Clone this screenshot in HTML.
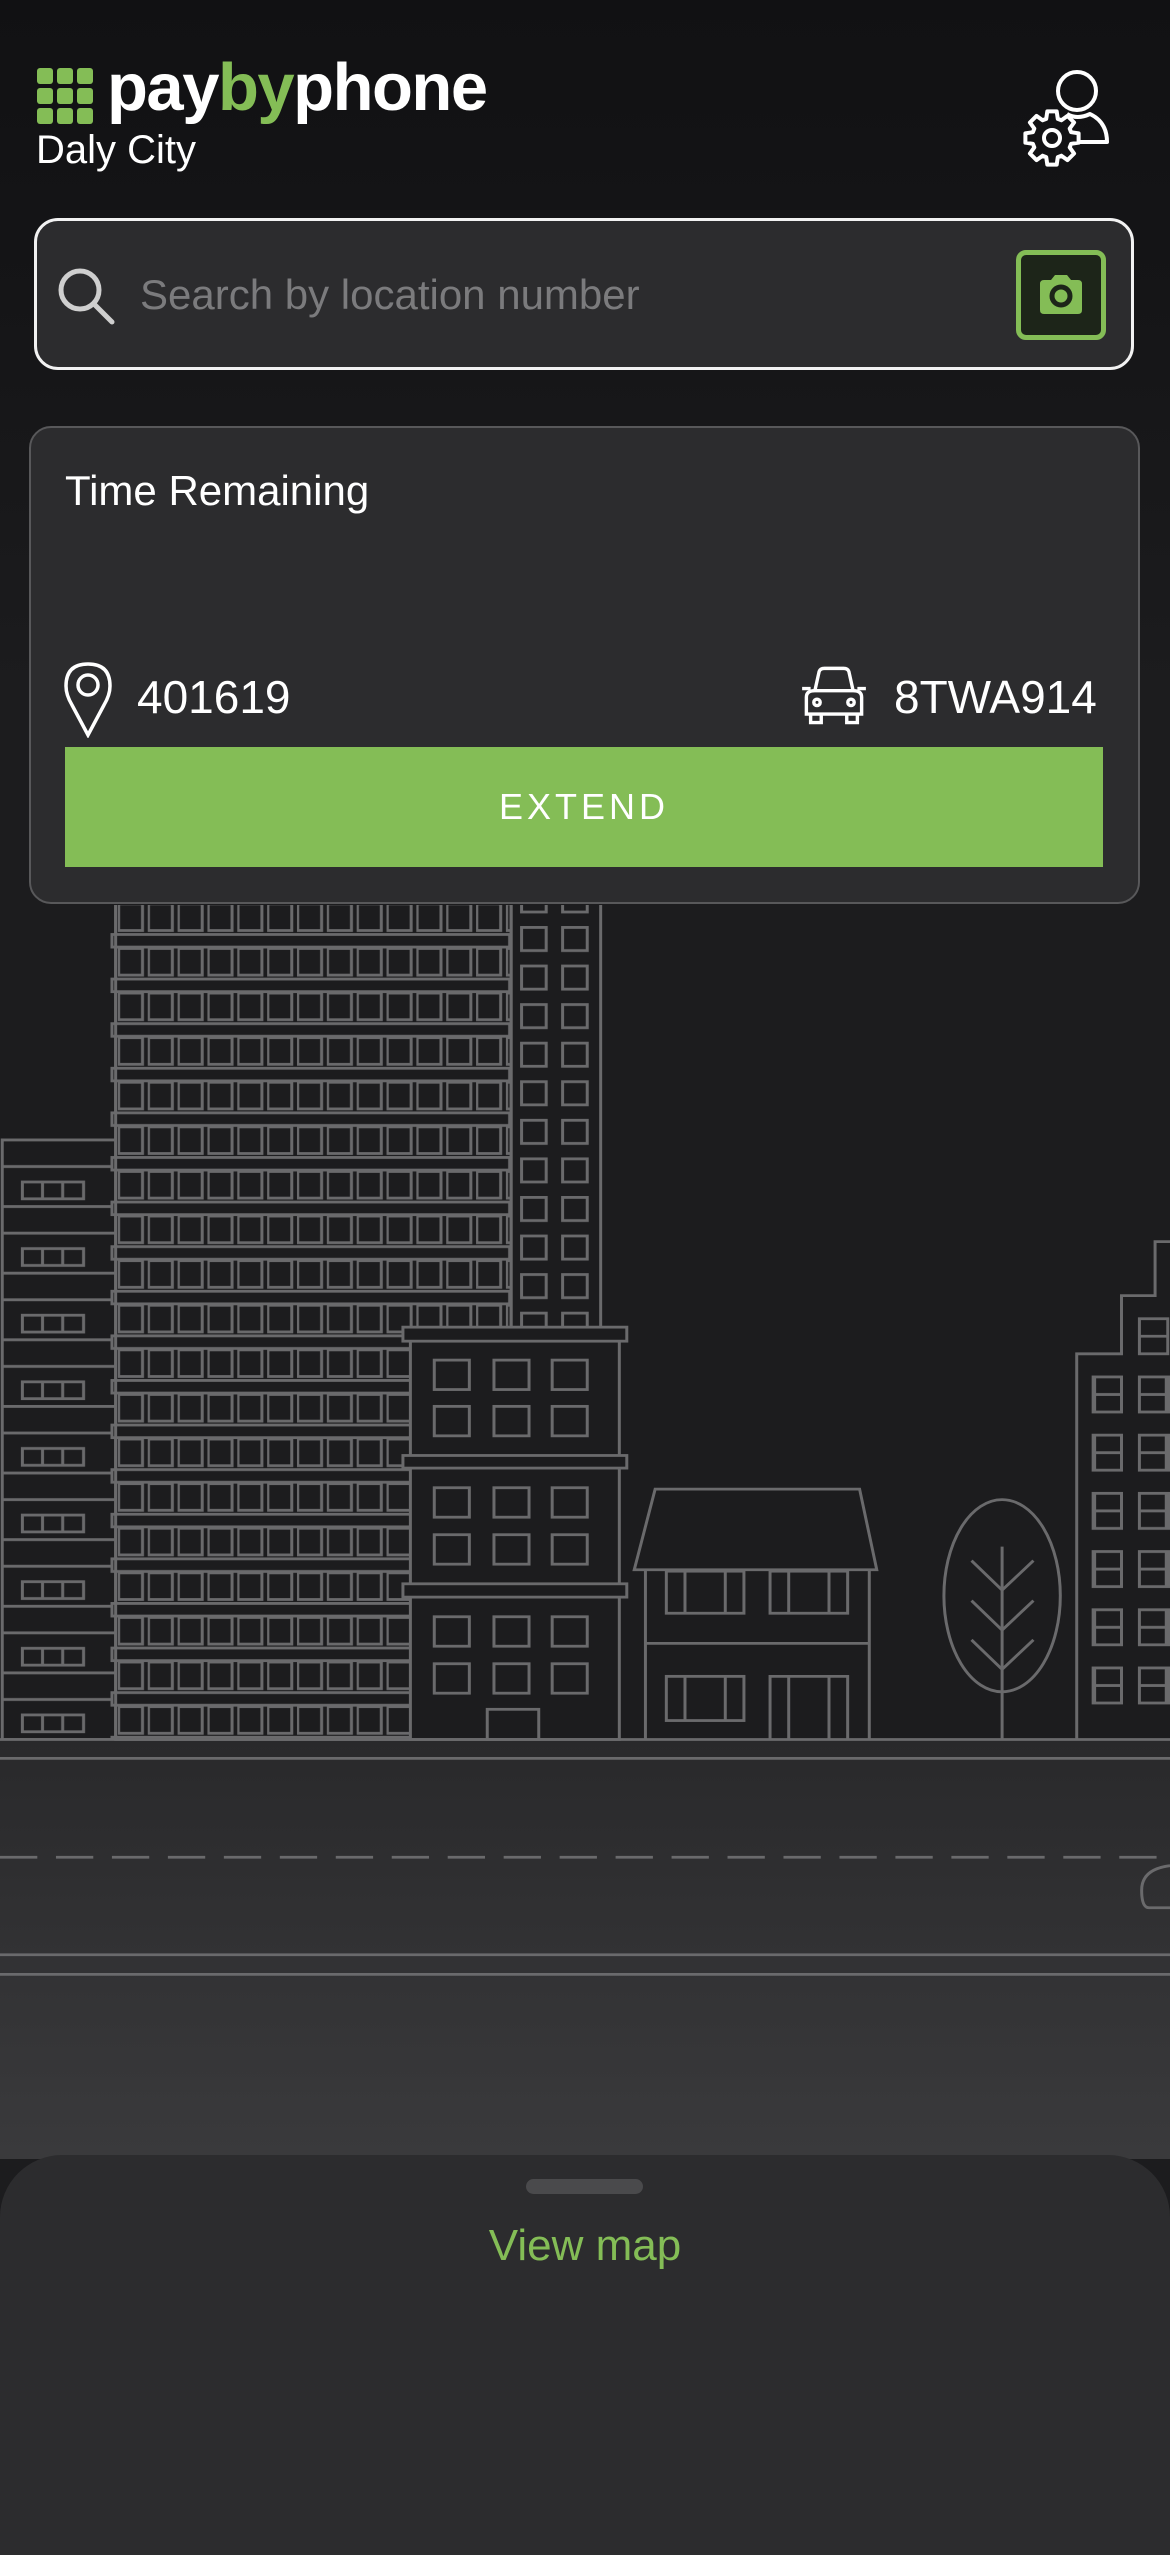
<!DOCTYPE html>
<html><head><meta charset="utf-8"><style>
*{margin:0;padding:0;box-sizing:border-box}
body{width:1170px;height:2532px;overflow:hidden;background:#1c1c1e;font-family:"Liberation Sans",sans-serif;position:relative;color:#fff}
.topbg{position:absolute;left:0;top:0;width:1170px;height:900px;background:linear-gradient(#111113 0px,#151517 300px,#1c1c1e 700px)}
.road{position:absolute;left:0;top:1739px;width:1170px;height:420px;background:linear-gradient(#29292b,#3a3a3c)}
.abs{position:absolute}
.logo{left:107px;top:54px;font-size:67px;font-weight:bold;letter-spacing:-1.5px;line-height:1}
.city{left:36px;top:130px;font-size:40px;line-height:1}
.search{left:34px;top:218px;width:1100px;height:152px;border:3px solid #f2f2f2;border-radius:24px;background:#2c2c2e}
.ph{left:140px;top:274px;font-size:42px;color:#7b7b7d;line-height:1}
.cam{left:1016px;top:250px;width:90px;height:90px;border:5px solid #84bd56;border-radius:10px;background:#1d2519}
.card{left:29px;top:426px;width:1111px;height:478px;border:2px solid #58585a;border-radius:22px;background:#2c2c2e}
.btn{left:65px;top:747px;width:1038px;height:120px;background:#84bd56;color:#fff;font-size:36px;letter-spacing:4px;text-align:center;line-height:120px}
.sheet{left:0;top:2155px;width:1170px;height:400px;background:#2c2c2e;border-radius:62px 62px 0 0}
</style></head><body>
<div class="topbg"></div>
<div class="road"></div>

<svg class="abs" style="left:37px;top:68px" width="56" height="56" viewBox="0 0 56 56" fill="#84bd56">
<rect x="0" y="0" width="16" height="16" rx="3"/><rect x="20" y="0" width="16" height="16" rx="3"/><rect x="40" y="0" width="16" height="16" rx="3"/>
<rect x="0" y="20" width="16" height="16" rx="3"/><rect x="20" y="20" width="16" height="16" rx="3"/><rect x="40" y="20" width="16" height="16" rx="3"/>
<rect x="0" y="40" width="16" height="16" rx="3"/><rect x="20" y="40" width="16" height="16" rx="3"/><rect x="40" y="40" width="16" height="16" rx="3"/>
</svg>
<div class="abs logo">pay<span style="color:#84bd56">by</span>phone</div>
<div class="abs city">Daly City</div>

<svg class="abs" style="left:1020px;top:70px" width="100" height="100" viewBox="0 0 100 100" fill="none" stroke="#fff" stroke-width="4" stroke-linejoin="round">
<circle cx="57" cy="21" r="19"/>
<path d="M47 44 Q57 50 70 44 Q87 52 87 72 L59 72"/>
<path d="M51.1 62.2 L58.6 63.3 L58.6 72.7 L51.1 73.8 L49.7 77.4 L54.1 83.5 L47.5 90.1 L41.4 85.7 L37.8 87.1 L36.7 94.6 L27.3 94.6 L26.2 87.1 L22.6 85.7 L16.5 90.1 L9.9 83.5 L14.3 77.4 L12.9 73.8 L5.4 72.7 L5.4 63.3 L12.9 62.2 L14.3 58.6 L9.9 52.5 L16.5 45.9 L22.6 50.3 L26.2 48.9 L27.3 41.4 L36.7 41.4 L37.8 48.9 L41.4 50.3 L47.5 45.9 L54.1 52.5 L49.7 58.6 Z"/>
<circle cx="32" cy="68" r="8"/>
</svg>

<div class="abs search"></div>
<svg class="abs" style="left:56px;top:266px" width="62" height="60" viewBox="0 0 62 60" fill="none" stroke="#cfcfcf" stroke-width="5">
<circle cx="24" cy="24" r="19"/><path d="M38 38 L56 56" stroke-linecap="round"/>
</svg>
<div class="abs ph">Search by location number</div>
<div class="abs cam"></div>
<svg class="abs" style="left:1036px;top:274px" width="50" height="42" viewBox="0 0 50 42">
<path d="M4 10 Q4 6 8 6 L15 6 L19 1 L31 1 L35 6 L42 6 Q46 6 46 10 L46 36 Q46 40 42 40 L8 40 Q4 40 4 36 Z" fill="#84bd56"/>
<circle cx="25" cy="22" r="9" fill="none" stroke="#1d2519" stroke-width="5"/>
</svg>

<div class="abs card"></div>
<div class="abs" style="left:65px;top:470px;font-size:42px;line-height:1">Time Remaining</div>
<svg class="abs" style="left:64px;top:662px" width="48" height="76" viewBox="0 0 48 76" fill="none" stroke="#fff" stroke-width="3.5">
<path d="M24 73 L8 43 Q2 33 2 24 Q2 2 24 2 Q46 2 46 24 Q46 33 40 43 Z"/><circle cx="24" cy="23" r="10"/>
</svg>
<div class="abs" style="left:137px;top:674px;font-size:46px;line-height:1">401619</div>
<svg class="abs" style="left:800px;top:664px" width="68" height="64" viewBox="0 0 64 58" fill="none" stroke="#fff" stroke-width="3.2">
<path d="M14 24 L18 6 Q19 3 23 3 L41 3 Q45 3 46 6 L50 24"/>
<path d="M6 30 Q6 24 14 24 L50 24 Q58 24 58 30 L58 46 L6 46 Z"/>
<path d="M10 46 L10 54 L20 54 L20 46 M44 46 L44 54 L54 54 L54 46"/>
<circle cx="16" cy="35" r="3"/><circle cx="48" cy="35" r="3"/><path d="M2 22 L10 22 M54 22 L62 22"/>
</svg>
<div class="abs" style="left:894px;top:674px;font-size:46px;line-height:1">8TWA914</div>
<div class="abs btn">EXTEND</div>

<!-- city -->
<svg class="abs" style="left:0;top:905px" width="1170" height="1075" viewBox="0 35 1568 1533" preserveAspectRatio="none">
<defs>
<pattern id="win" patternUnits="userSpaceOnUse" x="158" y="75" width="40" height="63.6"><rect x="1" y="22" width="32" height="38" fill="none" stroke="#6a6a6c" stroke-width="4"/></pattern>
<pattern id="band" patternUnits="userSpaceOnUse" x="148" y="75" width="1000" height="63.6"><rect x="2" y="2" width="533" height="18" fill="#1c1c1e" stroke="#6a6a6c" stroke-width="4"/></pattern>
<pattern id="nw" patternUnits="userSpaceOnUse" x="697" y="10" width="200" height="55"><rect x="2" y="2" width="33" height="33" fill="none" stroke="#6a6a6c" stroke-width="4"/><rect x="57" y="2" width="33" height="33" fill="none" stroke="#6a6a6c" stroke-width="4"/></pattern>
<pattern id="lw" patternUnits="userSpaceOnUse" x="0" y="368" width="200" height="95"><path d="M0 2 H155 M0 40 H155" stroke="#6a6a6c" stroke-width="4"/><rect x="30" y="62" width="82" height="24" fill="none" stroke="#6a6a6c" stroke-width="4"/><path d="M57 62 V86 M84 62 V86" stroke="#6a6a6c" stroke-width="4"/></pattern>
<pattern id="rw" patternUnits="userSpaceOnUse" x="1465" y="706" width="100" height="83"><g fill="none" stroke="#6a6a6c" stroke-width="4"><rect x="2" y="2" width="36" height="50"/><path d="M2 27 H38"/><rect x="62" y="2" width="36" height="50"/><path d="M62 27 H98"/></g></pattern>
</defs>
<g fill="none" stroke="#6a6a6c" stroke-width="4">
<rect x="3" y="368" width="152" height="857" fill="url(#lw)" stroke="none"/>
<path d="M3 368 V1225"/>
<rect x="155" y="0" width="530" height="1225" fill="#1c1c1e"/>
<rect x="155" y="0" width="530" height="1225" fill="url(#win)" stroke="none"/>
<rect x="148" y="75" width="537" height="1150" fill="url(#band)" stroke="none"/>
<path d="M155 0 V1225"/>
<rect x="685" y="0" width="120" height="640" fill="url(#nw)" stroke="none"/>
<path d="M805 0 V640 M685 0 V640"/>
<rect x="550" y="650" width="280" height="575" fill="#1c1c1e"/>
<rect x="540" y="637" width="300" height="20" fill="#1c1c1e"/>
<rect x="540" y="820" width="300" height="18" fill="#1c1c1e"/>
<rect x="540" y="1003" width="300" height="19" fill="#1c1c1e"/>
<rect x="582" y="684" width="47" height="42"/><rect x="662" y="684" width="47" height="42"/><rect x="740" y="684" width="47" height="42"/>
<rect x="582" y="750" width="47" height="42"/><rect x="662" y="750" width="47" height="42"/><rect x="740" y="750" width="47" height="42"/>
<rect x="582" y="866" width="47" height="42"/><rect x="662" y="866" width="47" height="42"/><rect x="740" y="866" width="47" height="42"/>
<rect x="582" y="933" width="47" height="42"/><rect x="662" y="933" width="47" height="42"/><rect x="740" y="933" width="47" height="42"/>
<rect x="582" y="1050" width="47" height="42"/><rect x="662" y="1050" width="47" height="42"/><rect x="740" y="1050" width="47" height="42"/>
<rect x="582" y="1117" width="47" height="42"/><rect x="662" y="1117" width="47" height="42"/><rect x="740" y="1117" width="47" height="42"/>
<rect x="653" y="1182" width="69" height="43"/>
<path d="M878 868 H1152 L1175 983 H850 Z"/>
<path d="M865 983 V1225 M1165 983 V1225 M865 1088 H1165"/>
<rect x="893" y="985" width="104" height="60"/><path d="M918 985 V1045 M972 985 V1045"/>
<rect x="1032" y="985" width="104" height="60"/><path d="M1057 985 V1045 M1111 985 V1045"/>
<rect x="893" y="1135" width="104" height="63"/><path d="M918 1135 V1198 M972 1135 V1198"/>
<path d="M1032 1225 V1135 H1136 V1225 M1057 1135 V1225 M1111 1135 V1225"/>
<ellipse cx="1343" cy="1020" rx="78" ry="137"/>
<path d="M1343 950 V1225 M1302 970 L1343 1012 L1385 970 M1302 1027 L1343 1069 L1385 1027 M1302 1083 L1343 1125 L1385 1083"/>
<rect x="1463" y="700" width="105" height="490" fill="url(#rw)" stroke="none"/>
<g><rect x="1527" y="625" width="38" height="50"/><path d="M1527 650 H1565"/></g>
<path d="M1443 1225 V675 H1503 V592 H1548 V515 H1568"/>
<path d="M0 1225 H1568 M0 1252 H1568"/>
<path d="M0 1393 H1568" stroke-dasharray="50 25"/>
<path d="M0 1532 H1568 M0 1560 H1568"/>
<path d="M1568 1405 Q1530 1410 1530 1440 Q1530 1465 1540 1465 H1568"/>
</g>
</svg>

<div class="abs sheet"></div>
<div class="abs" style="left:526px;top:2179px;width:117px;height:15px;border-radius:8px;background:#4a4a4c"></div>
<div class="abs" style="left:0;top:2224px;width:1170px;text-align:center;font-size:44px;color:#84bd56;line-height:1">View map</div>
</body></html>
